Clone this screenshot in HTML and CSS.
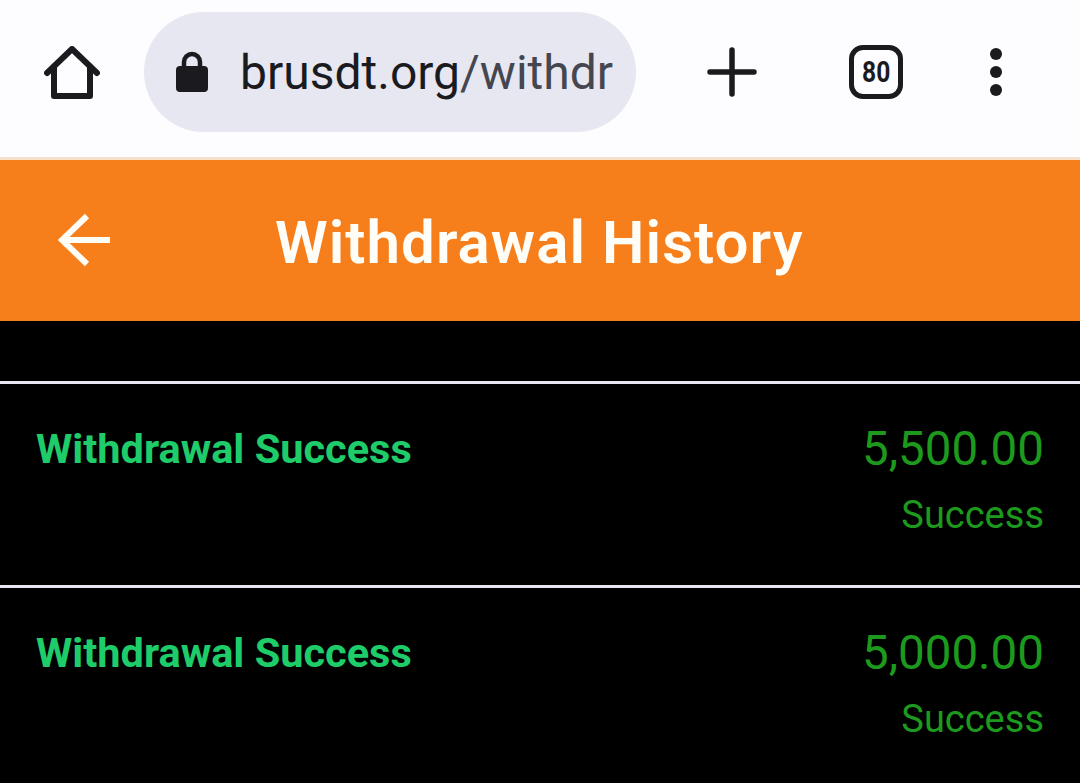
FILE: index.html
```html
<!DOCTYPE html>
<html lang="en">
<head>
    <meta charset="UTF-8">
    <meta name="viewport" content="width=device-width, initial-scale=1.0">
    <title>Withdrawal History</title>
    <link rel="stylesheet" href="styles.css">
</head>
<body>

<div class="toolbar">
    <svg class="icon-home" width="56" height="56" viewBox="0 0 56 56">
        <path d="M3 27 L28 3 L53 27 M10 22 V50 H46 V22" fill="none" stroke="#1b1b1f" stroke-width="6" stroke-linecap="round" stroke-linejoin="round"/>
    </svg>
    <div class="urlbar">
        <svg class="icon-lock" width="34" height="42" viewBox="0 0 34 42">
            <path d="M9 18 V11 a8 8 0 0 1 16 0 V18" fill="none" stroke="#1b1b1f" stroke-width="4.5"/>
            <rect x="1" y="15" width="32" height="26" rx="4" fill="#1b1b1f"/>
        </svg>
        <span class="url">brusdt.org<span class="url-path">/withdr</span></span>
    </div>
    <svg class="icon-plus" width="50" height="50" viewBox="0 0 50 50">
        <path d="M3 25 H47 M25 3 V47" stroke="#1b1b1f" stroke-width="5.5" stroke-linecap="round"/>
    </svg>
    <div class="tabs"><span class="tabs-count">80</span></div>
    <div class="dots"><i></i><i></i><i></i></div>
</div>

<div class="header">
    <svg class="icon-back" width="54" height="54" viewBox="0 0 54 54">
        <path d="M29 3 L4 27 L29 51 M5 27 H52" fill="none" stroke="#fffdf8" stroke-width="6"/>
    </svg>
    <h1>Withdrawal History</h1>
</div>

<div class="list">
    <div class="row">
        <div class="row-title">Withdrawal Success</div>
        <div class="row-right">
            <div class="amount">5,500.00</div>
            <div class="status">Success</div>
        </div>
    </div>
    <div class="row">
        <div class="row-title">Withdrawal Success</div>
        <div class="row-right">
            <div class="amount">5,000.00</div>
            <div class="status">Success</div>
        </div>
    </div>
</div>

</body>
</html>
```

FILE: styles.css
```css
body {
    margin: 0;
    height: 783px;
    overflow: hidden;
    background-color: #000;
    font-family: Roboto, sans-serif;
}
.toolbar {
    display: flex;
    align-items: center;
    height: 160px;
    padding: 0 0 13px 44px;
    box-sizing: border-box;
    background-color: #fdfcff;
    border-bottom: 3px solid #f6dfcb;
}
.icon-home {
    flex: none;
    margin-right: 44px;
    margin-top: 3px;
}
.urlbar {
    display: flex;
    align-items: center;
    width: 492px;
    height: 120px;
    flex: none;
    padding-left: 31px;
    box-sizing: border-box;
    background-color: #e6e7f0;
    border-radius: 60px;
}
.icon-lock {
    flex: none;
    margin-right: 31px;
}
.url {
    font-size: 48px;
    color: #1b1b1f;
    white-space: nowrap;
}
.url-path {
    color: #45464f;
}
.icon-plus {
    flex: none;
    margin-left: 71px;
}
.tabs {
    flex: none;
    width: 54px;
    height: 54px;
    margin-left: 92px;
    box-sizing: border-box;
    border: 5.5px solid #1b1b1f;
    border-radius: 14px;
    font-weight: 700;
    font-size: 30px;
    line-height: 43px;
    text-align: center;
    color: #1b1b1f;
}
.tabs-count {
    display: inline-block;
    transform: scaleX(0.82);
}
.dots {
    display: flex;
    flex-direction: column;
    gap: 6px;
    margin-left: 87px;
}
.dots i {
    display: block;
    width: 12px;
    height: 12px;
    border-radius: 50%;
    background-color: #1b1b1f;
}
.header {
    display: flex;
    align-items: center;
    height: 161px;
    background-color: #f67f1c;
    padding-left: 58px;
}
.icon-back {
    flex: none;
    margin-right: 163px;
    margin-bottom: 2px;
}
.header h1 {
    margin: 3px 0 0;
    font-size: 60px;
    font-weight: 600;
    color: #fffdf8;
    letter-spacing: 1.05px;
    white-space: nowrap;
}
.list {
    padding-top: 60px;
}
.row {
    display: flex;
    justify-content: space-between;
    height: 201px;
    padding: 0 36px;
    border-top: 3px solid #e6e7f0;
}
.row-title {
    margin-top: 40px;
    font-size: 41.5px;
    font-weight: 700;
    color: #1fcc6a;
}
.row-right {
    text-align: right;
    margin-top: 37px;
}
.amount {
    font-size: 47.5px;
    color: #1d9a1d;
}
.status {
    margin-top: 16px;
    font-size: 38px;
    color: #1d9a1d;
}
```
